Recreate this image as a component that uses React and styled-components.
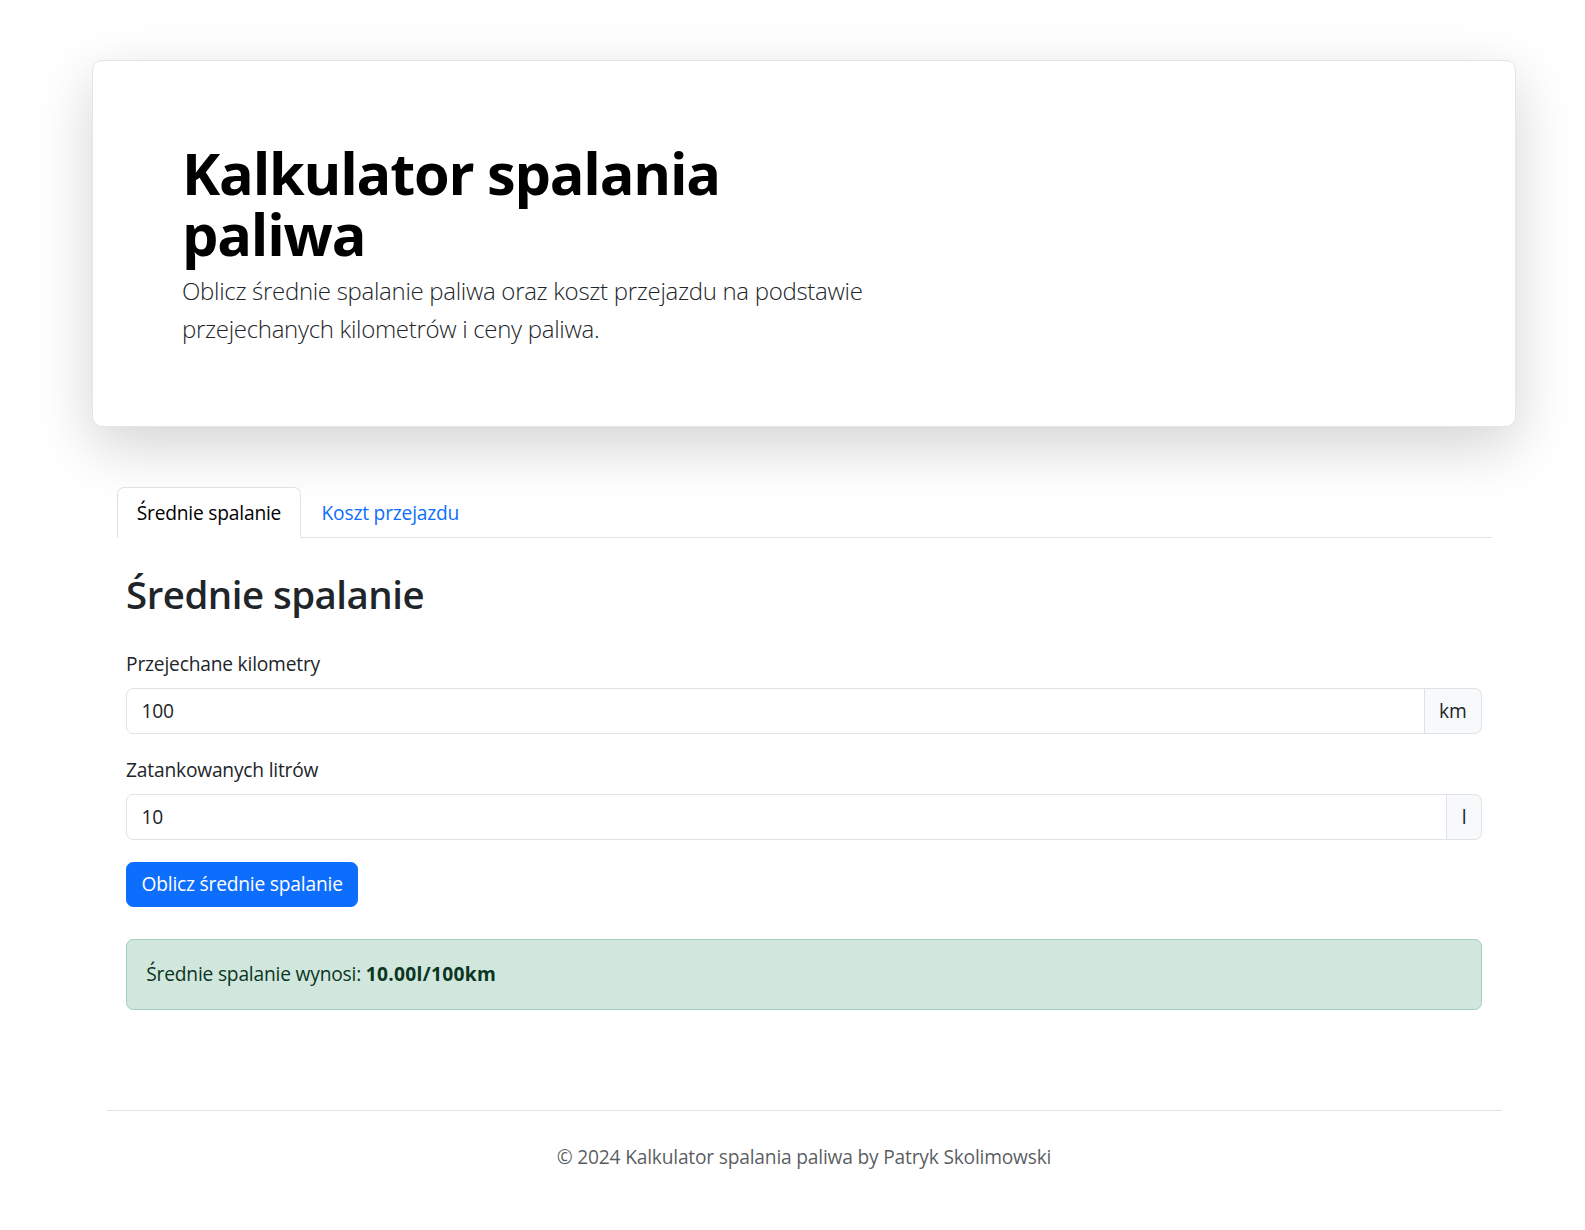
import React, { useState } from "react";
import styled, { createGlobalStyle, css } from "styled-components";

const GlobalStyle = createGlobalStyle`
  * {
    box-sizing: border-box;
  }

  body {
    margin: 0;
    background-color: #ffffff;
    color: #212529;
    font-family: "Open Sans", "Noto Sans", sans-serif;
    font-size: 19.2px;
    line-height: 28.8px;
    letter-spacing: -0.2px;
  }
`;

const StyledPage = styled.div`
  padding: 60px 0 48px 23px;
`;

const StyledHero = styled.header`
  max-width: 1424px;
  margin: 0 auto;
  padding: 81px 89px 77px;

  border: 1px solid #e3e5e8;
  border-radius: 10px;
  background-color: #ffffff;
  box-shadow: 0 19px 58px rgba(0, 0, 0, 0.175);
`;

const StyledHeroText = styled.div`
  max-width: 705px;
`;

const StyledTitle = styled.h1`
  margin: 0;

  color: #000;
  font-size: 57.6px;
  font-weight: 700;
  line-height: 61px;
  letter-spacing: -1.2px;
`;

const StyledLead = styled.p`
  margin: 8px 0 0;

  color: #212529;
  font-size: 24px;
  font-weight: 300;
  line-height: 38.4px;
  letter-spacing: -0.3px;
`;

const StyledMain = styled.main`
  max-width: 1375px;
  margin: 60px auto 0;
`;

const StyledTabs = styled.ul`
  margin: 0;
  padding: 0;

  display: flex;
  list-style: none;

  border-bottom: 1px solid #dee2e6;
`;

const StyledTab = styled.li`
  margin-bottom: -1px;
  padding: 11px 19.2px 9.6px;

  border: 1px solid transparent;
  border-radius: 7.2px 7.2px 0 0;
  cursor: pointer;

  ${({ isActive }) =>
    isActive
      ? css`
          color: #000;
          background-color: #ffffff;
          border-color: #dee2e6 #dee2e6 #ffffff;
        `
      : css`
          color: #0d6efd;
        `};
`;

const StyledPane = styled.section`
  padding: 9.6px;
`;

const StyledPaneTitle = styled.h2`
  margin: 23px 0 33px;

  color: #212529;
  font-size: 38.4px;
  font-weight: 600;
  line-height: 46px;
  letter-spacing: -0.5px;
`;

const StyledField = styled.div`
  margin-bottom: 22px;
`;

const StyledLabel = styled.label`
  display: block;
  margin-bottom: 9.6px;
`;

const StyledInputGroup = styled.div`
  display: flex;
  align-items: stretch;
`;

const StyledInput = styled.input`
  flex: 1;
  min-width: 0;
  height: 45.6px;
  padding: 7.2px 14.4px;

  border: 1px solid #dee2e6;
  border-radius: 7.2px 0 0 7.2px;
  outline: none;

  color: #212529;
  font: inherit;
  line-height: 28.8px;
  letter-spacing: inherit;
`;

const StyledAddon = styled.span`
  margin-left: -1px;
  padding: 7.2px 14.4px;

  display: flex;
  align-items: center;

  border: 1px solid #dee2e6;
  border-radius: 0 7.2px 7.2px 0;
  background-color: #f8f9fa;

  color: #212529;
`;

const StyledButton = styled.button`
  height: 45.6px;
  padding: 7.2px 14.4px;

  border: 1px solid #0d6efd;
  border-radius: 7.2px;
  background-color: #0d6efd;
  cursor: pointer;

  color: #ffffff;
  font: inherit;
  line-height: 28.8px;
  letter-spacing: inherit;
`;

const StyledAlert = styled.div`
  margin-top: 32px;
  padding: 20px 19.2px;

  border: 1px solid #a3cfbb;
  border-radius: 7.2px;
  background-color: #d1e7dd;

  color: #0a3622;

  strong {
    font-weight: 700;
    letter-spacing: 0.3px;
  }
`;

const StyledFooter = styled.footer`
  max-width: 1395px;
  margin: 90px auto 0;
  padding-top: 32px;

  border-top: 1px solid #dee2e6;

  color: rgba(33, 37, 41, 0.75);
  text-align: center;
`;

const TABS = [
  { name: "Średnie spalanie", value: "average" },
  { name: "Koszt przejazdu", value: "cost" },
];

const FIELDS = [
  { label: "Przejechane kilometry", value: "100", unit: "km" },
  { label: "Zatankowanych litrów", value: "10", unit: "l" },
];

const App = () => {
  const [activeTab, setActiveTab] = useState("average");

  return (
    <StyledPage>
      <GlobalStyle />

      <StyledHero>
        <StyledHeroText>
          <StyledTitle>Kalkulator spalania paliwa</StyledTitle>
          <StyledLead>
            Oblicz średnie spalanie paliwa oraz koszt przejazdu na podstawie
            przejechanych kilometrów i ceny paliwa.
          </StyledLead>
        </StyledHeroText>
      </StyledHero>

      <StyledMain>
        <StyledTabs>
          {TABS.map((tab) => (
            <StyledTab
              key={tab.value}
              isActive={tab.value === activeTab}
              onClick={() => setActiveTab(tab.value)}
            >
              {tab.name}
            </StyledTab>
          ))}
        </StyledTabs>

        <StyledPane>
          <StyledPaneTitle>Średnie spalanie</StyledPaneTitle>

          {FIELDS.map((field) => (
            <StyledField key={field.unit}>
              <StyledLabel>{field.label}</StyledLabel>
              <StyledInputGroup>
                <StyledInput type="number" defaultValue={field.value} />
                <StyledAddon>{field.unit}</StyledAddon>
              </StyledInputGroup>
            </StyledField>
          ))}

          <StyledButton>Oblicz średnie spalanie</StyledButton>

          <StyledAlert>
            Średnie spalanie wynosi: <strong>10.00l/100km</strong>
          </StyledAlert>
        </StyledPane>
      </StyledMain>

      <StyledFooter>
        © 2024 Kalkulator spalania paliwa by Patryk Skolimowski
      </StyledFooter>
    </StyledPage>
  );
};

export default App;
